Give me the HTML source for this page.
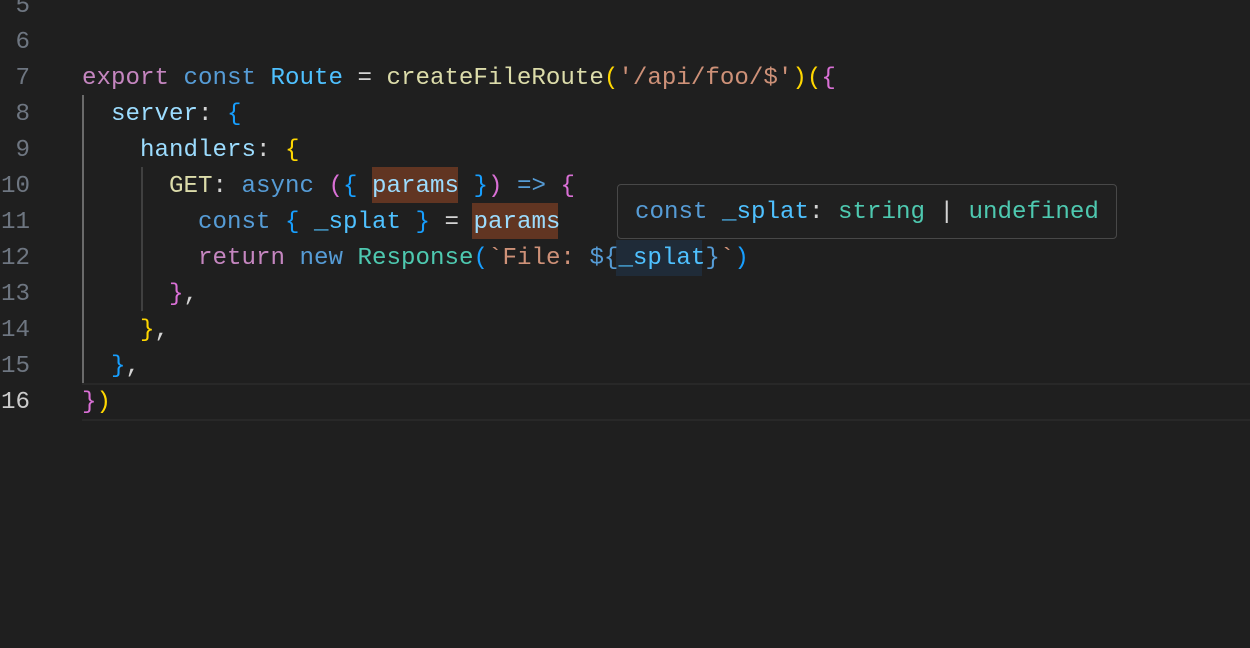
<!DOCTYPE html>
<html><head><style>
html,body{margin:0;padding:0;background:#1f1f1f;width:1250px;height:648px;overflow:hidden}
body{position:relative;font-family:"Liberation Mono",monospace;font-size:24.17px}
.ln{position:absolute;left:0;width:30px;text-align:right;color:#6e7681;height:36px;line-height:36px;transform:translateY(2px)}
.cl{position:absolute;left:82px;white-space:pre;height:36px;line-height:36px;color:#d4d4d4;transform:translateY(2px)}
.g{position:absolute;width:2px;background:#404040}
.hl{position:absolute;background:#613522;height:36px}
.k{color:#c586c0}.b{color:#569cd6}.c{color:#4fc1ff}.f{color:#dcdcaa}.s{color:#ce9178}
.v{color:#9cdcfe}.t{color:#4ec9b0}.y{color:#ffd700}.p{color:#da70d6}.bl{color:#179fff}
</style></head><body>
<div style="position:absolute;left:82px;top:383px;width:1168px;height:34px;border-top:2px solid #282828;border-bottom:2px solid #282828"></div>
<div class="g" style="left:82px;top:95px;height:288px;background:#6a6a6a"></div>
<div class="g" style="left:141px;top:167px;height:144px"></div>
<div class="hl" style="left:372px;top:167px;width:86px"></div>
<div class="hl" style="left:472px;top:203px;width:86px"></div>
<div class="hl" style="left:616px;top:240px;width:86px;background:#1f2b38"></div>

<div class="ln" style="top:-13px">5</div>
<div class="ln" style="top:23px">6</div>
<div class="ln" style="top:59px">7</div>
<div class="ln" style="top:95px">8</div>
<div class="ln" style="top:131px">9</div>
<div class="ln" style="top:167px">10</div>
<div class="ln" style="top:203px">11</div>
<div class="ln" style="top:239px">12</div>
<div class="ln" style="top:275px">13</div>
<div class="ln" style="top:311px">14</div>
<div class="ln" style="top:347px">15</div>
<div class="ln" style="top:383px;color:#cccccc">16</div>

<div class="cl" style="top:59px"><span class="k">export</span> <span class="b">const</span> <span class="c">Route</span> = <span class="f">createFileRoute</span><span class="y">(</span><span class="s">'/api/foo/$'</span><span class="y">)(</span><span class="p">{</span></div>
<div class="cl" style="top:95px">  <span class="v">server</span>: <span class="bl">{</span></div>
<div class="cl" style="top:131px">    <span class="v">handlers</span>: <span class="y">{</span></div>
<div class="cl" style="top:167px">      <span class="f">GET</span>: <span class="b">async</span> <span class="p">(</span><span class="bl">{</span> <span class="v">params</span> <span class="bl">}</span><span class="p">)</span> <span class="b">=&gt;</span> <span class="p">{</span></div>
<div class="cl" style="top:203px">        <span class="b">const</span> <span class="bl">{</span> <span class="c">_splat</span> <span class="bl">}</span> = <span class="v">params</span></div>
<div class="cl" style="top:239px">        <span class="k">return</span> <span class="b">new</span> <span class="t">Response</span><span class="bl">(</span><span class="s">`File: </span><span class="b">${</span><span class="c">_splat</span><span class="b">}</span><span class="s">`</span><span class="bl">)</span></div>
<div class="cl" style="top:275px">      <span class="p">}</span>,</div>
<div class="cl" style="top:311px">    <span class="y">}</span>,</div>
<div class="cl" style="top:347px">  <span class="bl">}</span>,</div>
<div class="cl" style="top:383px"><span class="p">}</span><span class="y">)</span></div>

<div style="position:absolute;left:617px;top:184px;width:500px;height:55px;border:1px solid #484848;border-radius:4px;background:#202020;box-sizing:border-box"></div>
<div class="cl" style="left:635px;top:193px"><span class="b">const</span> <span class="c">_splat</span>: <span class="t">string</span> | <span class="t">undefined</span></div>
</body></html>
